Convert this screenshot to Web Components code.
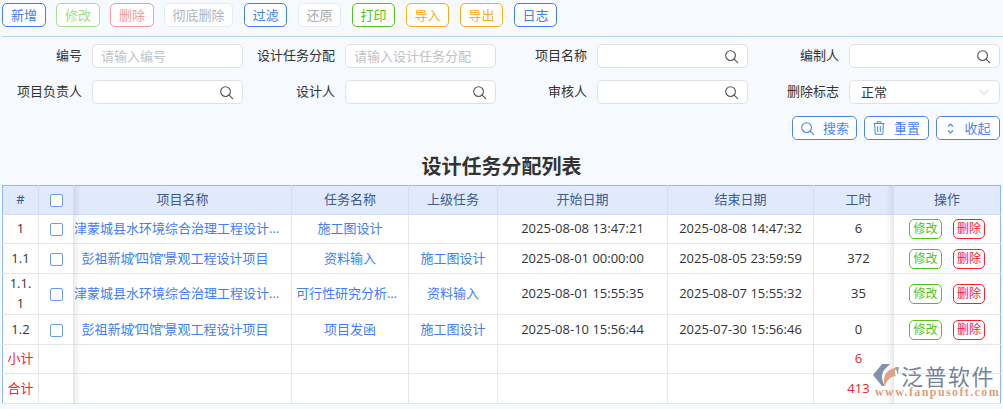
<!DOCTYPE html>
<html lang="zh"><head><meta charset="utf-8">
<style>
html,body{margin:0;padding:0;background:#f6fafe;}
body{width:1003px;height:409px;overflow:hidden;font:13px "Open Sans","Noto Sans CJK SC",sans-serif;color:#333;position:relative}
</style></head><body>
<fp-page></fp-page>
<template id="t-btn"><style>
:host{display:inline-flex;box-sizing:border-box;height:24px;align-items:center;justify-content:center;border:1px solid var(--c,#3b82f6);border-radius:5px;background:#fff;color:var(--t,var(--c,#3b82f6));font-size:13px;line-height:22px;white-space:nowrap;gap:var(--g,0)}
</style><slot></slot></template>
<script>
const S='<svg width="15" height="15" viewBox="0 0 16 16" fill="none" stroke="currentColor" stroke-width="1.2"><circle cx="7" cy="7" r="5.2"/><path d="M10.8 10.8L14.6 14.6" stroke-linecap="round"/></svg>';
class FpBtn extends HTMLElement{constructor(){super();const r=this.attachShadow({mode:'open'});r.append(document.getElementById('t-btn').content.cloneNode(true));}}
customElements.define('fp-btn',FpBtn);
class FpToolbar extends HTMLElement{constructor(){super();const r=this.attachShadow({mode:'open'});
const b=[['新增',44,'#4080f0',0,10],['修改',44,'#a5e08f','#a0dc8a',10],['删除',44,'#f59aa0','#f59aa0',10],['彻底删除',69,'#e9ebee','#b0b3b8',11],['过滤',43,'#4080f0',0,11],['还原',43,'#e9ebee','#a8abb0',11],['打印',43,'#52c41a',0,11],['导入',43,'#faad14',0,11],['导出',43,'#faad14',0,11],['日志',43,'#4080f0',0,0]];
r.innerHTML='<style>:host{display:flex;box-sizing:border-box;height:37px;padding:3px 0 0 2px;position:relative}:host::after{content:"";position:absolute;left:2px;right:0;top:36px;height:1px;background:#b4d2f8}</style>'+b.map(x=>`<fp-btn style="width:${x[1]}px;margin-right:${x[4]}px;--c:${x[2]};${x[3]?'--t:'+x[3]:''}">${x[0]}</fp-btn>`).join('');}}
customElements.define('fp-toolbar',FpToolbar);
class FpField extends HTMLElement{constructor(){super();const r=this.attachShadow({mode:'open'});
const ph=this.getAttribute('ph'),v=this.getAttribute('value'),k=this.getAttribute('kind');
const ic=k==='search'?`<span class="i">${S}</span>`:k==='select'?'<svg class="c" width="12" height="12" viewBox="0 0 12 12" fill="none" stroke="#c8cacd" stroke-width="1"><path d="M1.5 4L6 8.5L10.5 4"/></svg>':'';
r.innerHTML=`<style>:host{display:grid;grid-template-columns:80px 151px;column-gap:10px;align-items:center;height:24px;color:#333}
label{text-align:right;white-space:nowrap;justify-self:end;margin-top:-4px}
.b{box-sizing:border-box;height:24px;width:151px;border:1px solid #dfe1e6;border-radius:5px;background:#fff;display:flex;align-items:center;padding:0 8px 0 8px;justify-content:space-between}
.p{color:#bfc2c7;margin-top:-2px}.v{color:#333;padding-left:3px;margin-top:-2px}.i{display:flex;color:#555}.c{margin-right:1px}
</style><label>${this.getAttribute('label')}</label><div class="b"><span class="${ph?'p':'v'}">${ph||v||''}</span>${ic}</div>`;}}
customElements.define('fp-field',FpField);
class FpForm extends HTMLElement{constructor(){super();const r=this.attachShadow({mode:'open'});
const act=[['搜索',S,65,8],['重置','<svg width="12" height="14" viewBox="0 0 12 14" fill="none" stroke="currentColor" stroke-width="1"><path d="M.5 2.5H11.5M4 2.5V.8H8V2.5M1.6 2.5L2.2 13.3H9.8L10.4 2.5M4.7 5V11M7.3 5V11"/></svg>',65,9],['收起','<svg width="11" height="13" viewBox="0 0 11 13" fill="none" stroke="currentColor" stroke-width="1.1"><path d="M3 4.5L5.5 2L8 4.5M3 8.5L5.5 11L8 8.5"/></svg>',64,8]];
r.innerHTML=`<style>:host{display:block;padding-top:7px}
.g{display:grid;grid-template-columns:232px repeat(3,231px);column-gap:21px;row-gap:12px;padding-left:2px}
.a{display:flex;justify-content:flex-end;gap:7px;margin-top:12px;padding-right:3px}
</style><div class="g"><slot></slot></div><div class="a">${act.map(a=>`<fp-btn style="width:${a[2]}px;--c:#4a86ee;--g:${a[3]}px">${a[1]}<span>${a[0]}</span></fp-btn>`).join('')}</div>`;}}
customElements.define('fp-form',FpForm);
class FpTable extends HTMLElement{constructor(){super();const r=this.attachShadow({mode:'open'});
const cols=[36,35,218,117,89,170,146,80,107];const hd=['#','','项目名称','任务名称','上级任务','开始日期','结束日期','工时','操作'];
const Q=c=>`<span class="q">${c}</span>`;
const U=t=>t===''?'':`<span class="u">${t}</span>`;
const P1='天津蒙城县水环境综合治理工程设计项目',P2='彭祖新城'+Q('“')+'四馆'+Q('”')+'景观工程设计项目';
const rows=[[29,'1',P1,'施工图设计','','2025-08-08 13:47:21','2025-08-08 14:47:32','6'],[30,'1.1',P2,'资料输入','施工图设计','2025-08-01 00:00:00','2025-08-05 23:59:59','372'],[41,'1.1.1',P1,'可行性研究分析报告','资料输入','2025-08-01 15:55:35','2025-08-07 15:55:32','35'],[30,'1.2',P2,'项目发函','施工图设计','2025-08-10 15:56:44','2025-07-30 15:56:46','0']];
const box='<span class="cb"></span>';
let h=`<style>:host{display:block;margin:5px 2px 0 2px;position:relative;width:999px}
table{border-collapse:collapse;table-layout:fixed;width:998px;background:#fff;border:0}
th,td{border:1px solid #e4e6ea;text-align:center;padding:0;font-weight:400;line-height:20px;overflow:hidden;vertical-align:middle;box-sizing:border-box}
th{background:#e1eafd;color:#3c5a8c;border-color:#cfdffb;}
th:first-child,td:first-child{border-left-color:#8fb8f6}
th:last-child,td:last-child{border-right-color:#8fb8f6}
thead th{border-top-color:#8fb8f6}
td{color:#333;font-size:13px}
.u{display:block;margin-top:-2px}
th .u{margin-top:-3px}
.n{word-break:break-all;padding:0 6px}
.lk{color:#4080f0}
.el{display:block;white-space:nowrap;overflow:hidden;text-overflow:ellipsis;padding:0 4px;margin-top:-2px}
.el.w{margin-left:-13px;width:228px;padding:0}
.q{display:inline-block;margin:0 -1px}
.cb{display:inline-block;box-sizing:border-box;width:13px;height:13px;border:1px solid #6b9bee;border-radius:2px;background:#fff;vertical-align:top;margin-top:4px}
.r{color:#f5222d}
.t{padding-left:10px}
.op{display:inline-flex;align-items:center;justify-content:center;box-sizing:border-box;height:20px;border-radius:5px;background:#fff;font-size:12px;line-height:18px;vertical-align:top;border:1px solid}
.op.e{width:33px;color:#52c41a;border-color:#52c41a;margin-right:11px}
.op.d{width:32px;color:#f5222d;border-color:#f5222d}
.fz1,.fz2{position:absolute;top:1px;height:218px;width:7px;pointer-events:none}
.fz1{left:72px;background:linear-gradient(90deg,rgba(0,0,0,.07),rgba(0,0,0,0))}
.fz2{left:884px;background:linear-gradient(270deg,rgba(0,0,0,.07),rgba(0,0,0,0))}
.wm{position:absolute;left:871px;top:179px;width:130px;height:40px;pointer-events:none}
.wm svg{position:absolute;left:0;top:0}
.wm b{position:absolute;left:28px;top:0;font:400 22px/22px "Noto Sans CJK SC",sans-serif;color:rgba(90,108,140,.85);letter-spacing:1.5px;white-space:nowrap}
.wm i{position:absolute;left:2px;top:22px;font:700 12px/13px "Liberation Serif",serif;color:rgba(214,140,100,.85);letter-spacing:1.4px;white-space:nowrap}
</style><table><colgroup>${cols.map(c=>`<col style="width:${c}px">`).join('')}</colgroup><thead><tr style="height:29px">${hd.map((t,i)=>`<th class="${i==7?'t':''}">${i==1?box:U(t)}</th>`).join('')}</tr></thead><tbody>`;
rows.forEach(x=>{h+=`<tr style="height:${x[0]}px"><td class="n">${U(x[1])}</td><td>${box}</td><td class="lk"><span class="el w">${x[2]}</span></td><td class="lk"><span class="el">${x[3]}</span></td><td class="lk">${U(x[4])}</td><td>${U(x[5])}</td><td>${U(x[6])}</td><td class="t">${U(x[7])}</td><td><span class="op e">修改</span><span class="op d">删除</span></td></tr>`;});
[[29,'小计','6'],[30,'合计','413']].forEach(f=>{h+=`<tr style="height:${f[0]}px"><td class="r">${U(f[1])}</td><td></td><td></td><td></td><td></td><td></td><td></td><td class="r t">${U(f[2])}</td><td></td></tr>`;});
h+=`</tbody></table><div class="fz1"></div><div class="fz2"></div><div class="wm"><svg width="27" height="23" viewBox="0 0 27 23"><path d="M0 11L9 0H17L12 5C8 9 8 16 12 22H9Z" fill="#6f7f9b" opacity=".85"/><path d="M12 22C9 14 13 4 24 4C21 6 22 10 23 12C18 12 14 16 12 22Z" fill="#d99a78" opacity=".9"/><path d="M22 3H26L25 11Z" fill="#6f7f9b" opacity=".7"/></svg><b>泛普软件</b><i>www.fanpusoft.com</i></div>`;
r.innerHTML=h;}}
customElements.define('fp-table',FpTable);
class FpPage extends HTMLElement{constructor(){super();const r=this.attachShadow({mode:'open'});
r.innerHTML=`<style>:host{display:block}h1{margin:0;height:29px;padding-top:11px;font:700 20px/29px "Noto Sans CJK SC",sans-serif;color:#333;text-align:center}</style>
<fp-toolbar></fp-toolbar>
<fp-form>
<fp-field label="编号" ph="请输入编号"></fp-field><fp-field label="设计任务分配" ph="请输入设计任务分配"></fp-field><fp-field label="项目名称" kind="search"></fp-field><fp-field label="编制人" kind="search"></fp-field>
<fp-field label="项目负责人" kind="search"></fp-field><fp-field label="设计人" kind="search"></fp-field><fp-field label="审核人" kind="search"></fp-field><fp-field label="删除标志" kind="select" value="正常"></fp-field>
</fp-form><h1>设计任务分配列表</h1><fp-table></fp-table>`;}}
customElements.define('fp-page',FpPage);
</script></body></html>
